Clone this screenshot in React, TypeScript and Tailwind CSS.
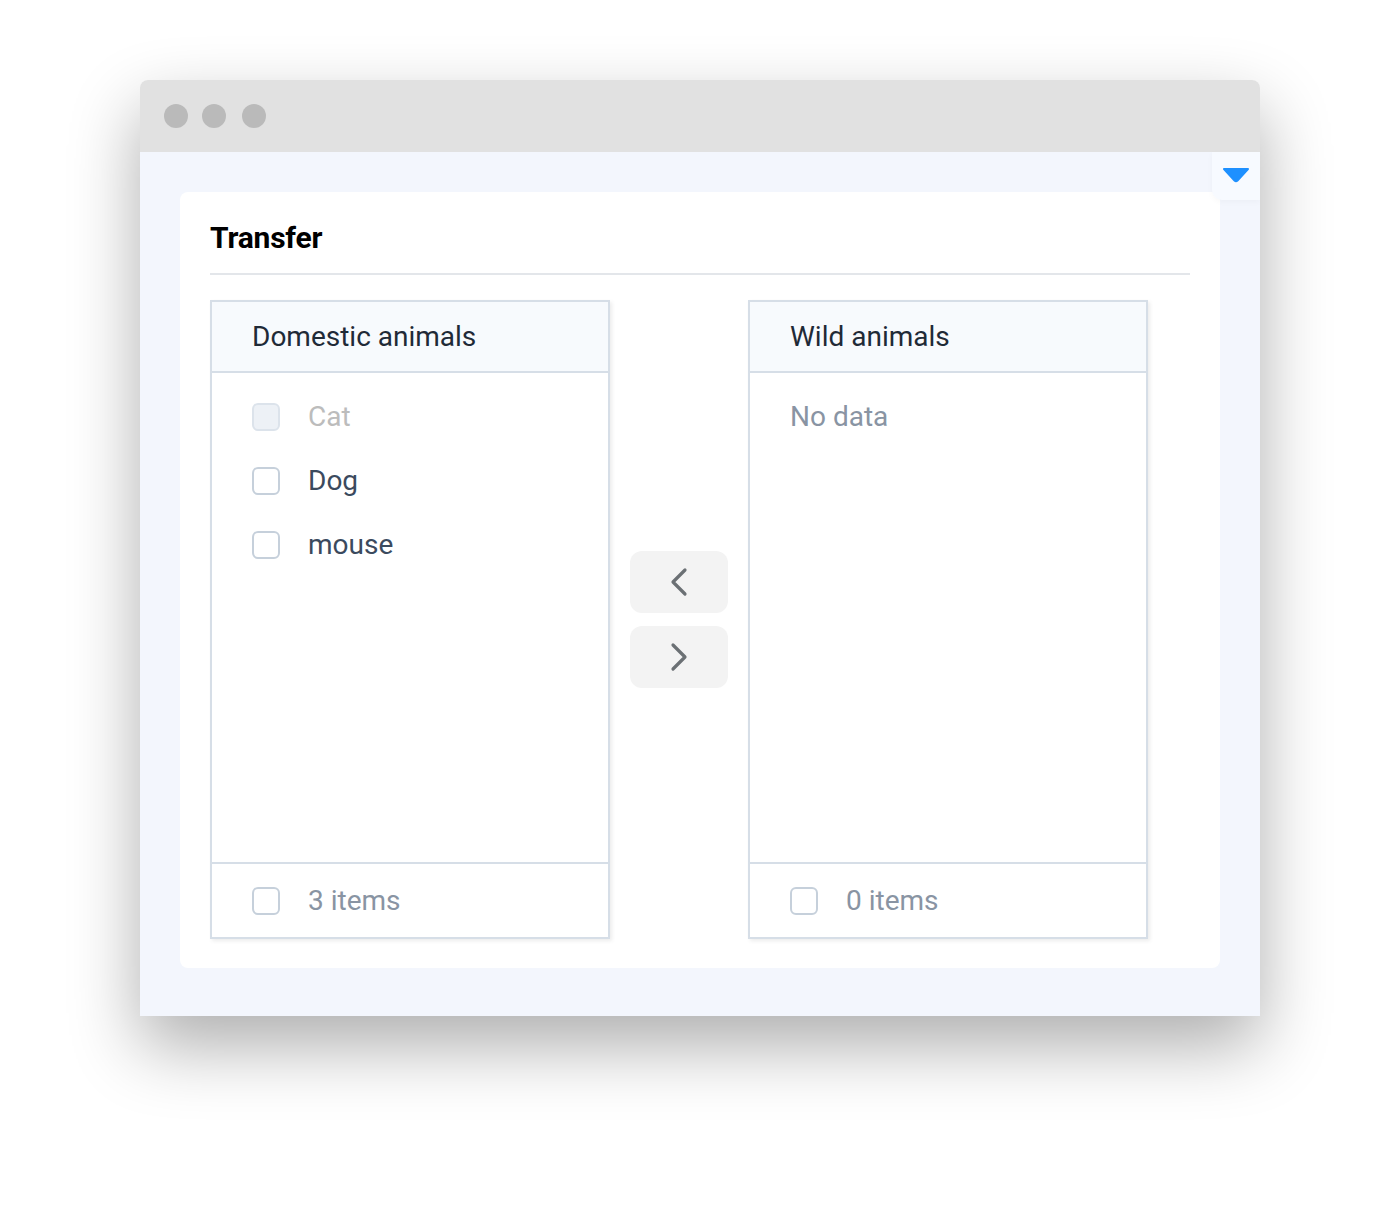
import React from 'react';
import { ChevronLeft, ChevronRight } from 'lucide-react';

const font = { fontFamily: 'Roboto, "Liberation Sans", sans-serif' };

const Checkbox: React.FC<{ disabled?: boolean }> = ({ disabled }) => (
  <span
    className={`block w-[28px] h-[28px] rounded-[6px] border-2 ${
      disabled ? 'bg-[#edf1f6] border-[#dce3eb]' : 'bg-white border-[#c6d0db]'
    }`}
  />
);

const Panel: React.FC<{ title: string; items: { label: string; disabled?: boolean }[]; count: number }> = ({
  title,
  items,
  count,
}) => (
  <div className="w-[400px] h-[639px] flex flex-col border-2 border-[#d6dee7] bg-white shadow-[2px_2px_4px_rgba(0,0,0,0.08)]">
    <div className="h-[71px] shrink-0 flex items-center pl-[40px] bg-[#f7fafd] border-b-2 border-[#d6dee7] text-[28px] text-[#1f2a37]">
      {title}
    </div>
    <div className="flex-1 pt-[12px]">
      {items.length === 0 ? (
        <div className="h-[64px] flex items-center pl-[40px] text-[28px] text-[#8994a3]">No data</div>
      ) : (
        items.map((it) => (
          <div key={it.label} className="h-[64px] flex items-center pl-[40px] gap-[28px]">
            <Checkbox disabled={it.disabled} />
            <span className={`text-[28px] ${it.disabled ? 'text-[#bcbcbc]' : 'text-[#3b4a5e]'}`}>{it.label}</span>
          </div>
        ))
      )}
    </div>
    <div className="h-[75px] shrink-0 flex items-center pl-[40px] gap-[28px] border-t-2 border-[#d6dee7]">
      <Checkbox />
      <span className="text-[28px] text-[#8994a3]">{count} items</span>
    </div>
  </div>
);

export default function App() {
  return (
    <div className="w-[1400px] h-[1216px] bg-white pt-[80px] pl-[140px]" style={font}>
      <div className="w-[1120px] h-[936px] rounded-t-[8px] overflow-hidden flex flex-col shadow-[0_30px_70px_rgba(0,0,0,0.32)]">
        <div className="h-[72px] shrink-0 bg-[#e1e1e1] flex items-center pl-[24px] gap-[14px]">
          <span className="w-[24px] h-[24px] rounded-full bg-[#bababa]" />
          <span className="w-[24px] h-[24px] rounded-full bg-[#bababa]" />
          <span className="w-[24px] h-[24px] rounded-full bg-[#bababa] ml-[2px]" />
        </div>
        <div className="relative flex-1 bg-[#f3f6fd] pt-[40px] px-[40px]">
          <div className="absolute top-0 right-0 w-[48px] h-[48px] bg-[#f7faff] rounded-bl-[10px] shadow-[0_2px_6px_rgba(0,0,0,0.03)] flex items-center justify-center">
            <svg width="28" height="16" viewBox="0 0 28 16" className="-mt-[2px]">
              <path d="M2 2 H26 L15.5 13.5 Q14 15 12.5 13.5 Z" fill="#1e90ff" stroke="#1e90ff" strokeWidth="2" strokeLinejoin="round" />
            </svg>
          </div>
          <div className="h-[776px] bg-white rounded-[8px] px-[30px] pt-[28px]">
            <h1 className="text-[30px] font-bold text-black leading-[36px] tracking-[-0.2px]">Transfer</h1>
            <div className="mt-[17px] h-[2px] bg-[#e3e6ea]" />
            <div className="mt-[25px] flex items-center gap-[20px]">
              <Panel
                title="Domestic animals"
                items={[{ label: 'Cat', disabled: true }, { label: 'Dog' }, { label: 'mouse' }]}
                count={3}
              />
              <div className="flex flex-col gap-[13px]">
                <button className="w-[98px] h-[62px] rounded-[12px] bg-[#f3f3f3] flex items-center justify-center text-[#6b7074]">
                  <ChevronLeft size={48} strokeWidth={1.6} />
                </button>
                <button className="w-[98px] h-[62px] rounded-[12px] bg-[#f3f3f3] flex items-center justify-center text-[#6b7074]">
                  <ChevronRight size={48} strokeWidth={1.6} />
                </button>
              </div>
              <Panel title="Wild animals" items={[]} count={0} />
            </div>
          </div>
        </div>
      </div>
    </div>
  );
}
